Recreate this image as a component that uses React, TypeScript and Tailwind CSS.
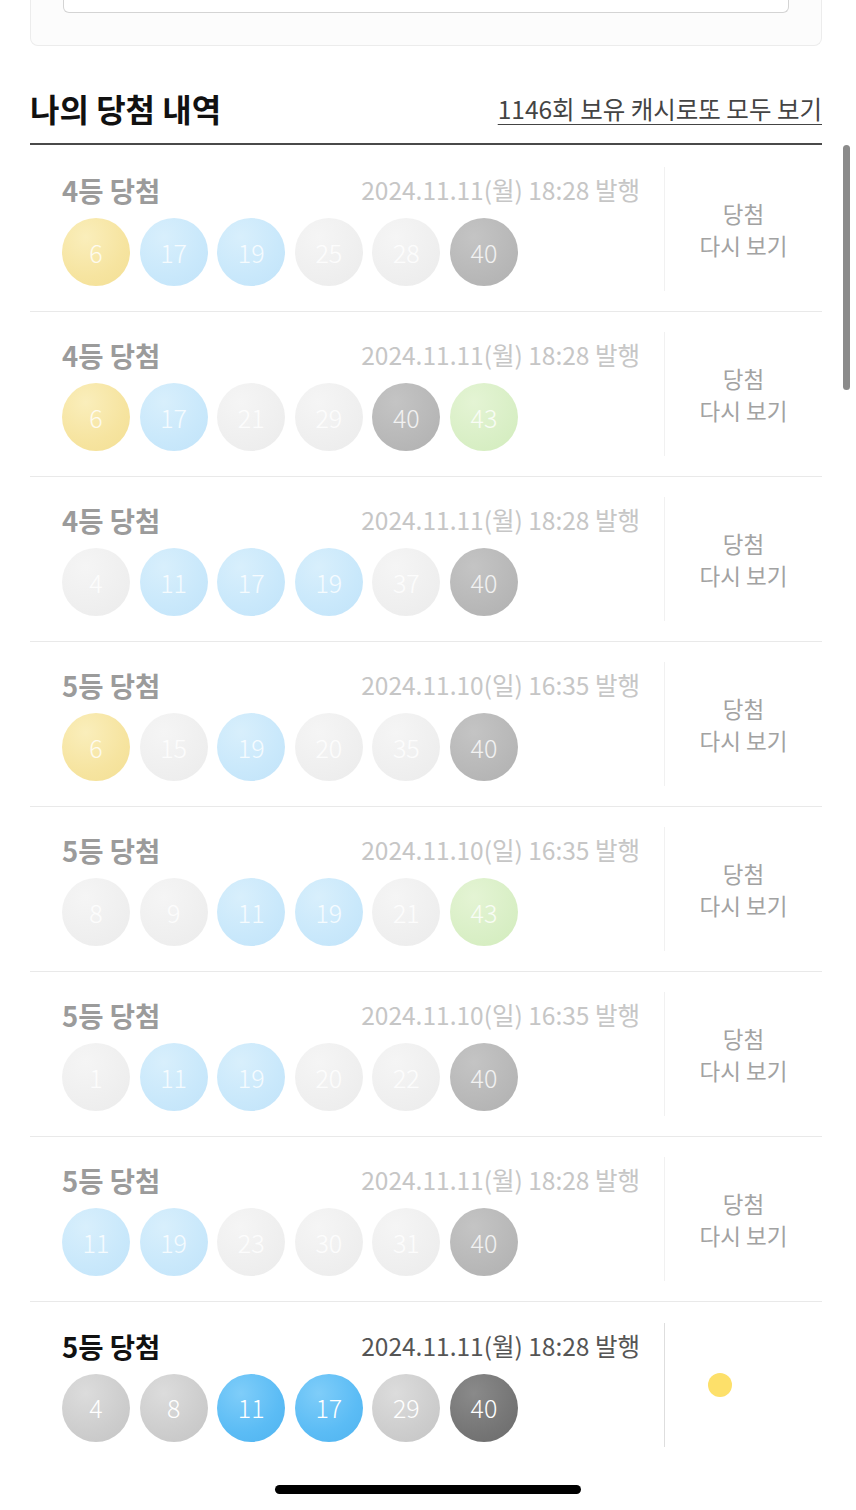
import React from "react";

type Kind = "y" | "b" | "d" | "g" | "n";

const ballFull: Record<Kind, string> = {
  y: "bg-[radial-gradient(circle_at_35%_28%,#fde27a_0%,#f6cc3a_60%,#efc020_100%)]",
  b: "bg-[radial-gradient(circle_at_35%_28%,#7fcdf9_0%,#5bbcf5_60%,#4fb3ef_100%)]",
  d: "bg-[radial-gradient(circle_at_35%_28%,#8a8a8a_0%,#767676_60%,#6a6a6a_100%)]",
  g: "bg-[radial-gradient(circle_at_35%_28%,#b6e08a_0%,#9fd46c_60%,#92cc5c_100%)]",
  n: "bg-[radial-gradient(circle_at_35%_28%,#dcdcdc_0%,#cdcdcd_60%,#c4c4c4_100%)]",
};

const ballFaded: Record<Kind, string> = {
  y: "bg-[radial-gradient(circle_at_35%_28%,#faeebb_0%,#f6e4a0_60%,#f3df94_100%)]",
  b: "bg-[radial-gradient(circle_at_35%_28%,#d8effc_0%,#c9e8fb_60%,#c1e3f9_100%)]",
  d: "bg-[radial-gradient(circle_at_35%_28%,#c4c4c4_0%,#b8b8b8_60%,#b0b0b0_100%)]",
  g: "bg-[radial-gradient(circle_at_35%_28%,#e4f4d4_0%,#d9efc6_60%,#d2ecbc_100%)]",
  n: "bg-[radial-gradient(circle_at_35%_28%,#f5f5f5_0%,#efefef_60%,#ebebeb_100%)]",
};

type Row = {
  rank: string;
  date: string;
  balls: [number, Kind][];
  faded: boolean;
};

const rows: Row[] = [
  { rank: "4등 당첨", date: "2024.11.11(월) 18:28 발행", faded: true, balls: [[6, "y"], [17, "b"], [19, "b"], [25, "n"], [28, "n"], [40, "d"]] },
  { rank: "4등 당첨", date: "2024.11.11(월) 18:28 발행", faded: true, balls: [[6, "y"], [17, "b"], [21, "n"], [29, "n"], [40, "d"], [43, "g"]] },
  { rank: "4등 당첨", date: "2024.11.11(월) 18:28 발행", faded: true, balls: [[4, "n"], [11, "b"], [17, "b"], [19, "b"], [37, "n"], [40, "d"]] },
  { rank: "5등 당첨", date: "2024.11.10(일) 16:35 발행", faded: true, balls: [[6, "y"], [15, "n"], [19, "b"], [20, "n"], [35, "n"], [40, "d"]] },
  { rank: "5등 당첨", date: "2024.11.10(일) 16:35 발행", faded: true, balls: [[8, "n"], [9, "n"], [11, "b"], [19, "b"], [21, "n"], [43, "g"]] },
  { rank: "5등 당첨", date: "2024.11.10(일) 16:35 발행", faded: true, balls: [[1, "n"], [11, "b"], [19, "b"], [20, "n"], [22, "n"], [40, "d"]] },
  { rank: "5등 당첨", date: "2024.11.11(월) 18:28 발행", faded: true, balls: [[11, "b"], [19, "b"], [23, "n"], [30, "n"], [31, "n"], [40, "d"]] },
  { rank: "5등 당첨", date: "2024.11.11(월) 18:28 발행", faded: false, balls: [[4, "n"], [8, "n"], [11, "b"], [17, "b"], [29, "n"], [40, "d"]] },
];

function Ball({ n, k, faded }: { n: number; k: Kind; faded: boolean }) {
  return (
    <div
      className={`w-[68px] h-[68px] rounded-full flex items-center justify-center text-[25px] font-light leading-none ${
        faded ? "text-white/80 " + ballFaded[k] : "text-white " + ballFull[k]
      }`}
    >
      {n}
    </div>
  );
}

function HistoryRow({ row, last }: { row: Row; last: boolean }) {
  return (
    <div className={`flex h-[165px] ${last ? "" : "border-b border-[#e9e9e9]"}`}>
      <div className="flex-1 pl-[32px] pr-[24px] flex flex-col justify-center">
        <div className="flex items-center justify-between h-[36px]">
          <span className={`text-[27.5px] font-bold leading-[36px] ${row.faded ? "text-[#9b9b9b]" : "text-[#111]"}`}>
            {row.rank}
          </span>
          <span className={`text-[24.5px] leading-[36px] ${row.faded ? "text-[#c6c6c6]" : "text-[#555]"}`}>
            {row.date}
          </span>
        </div>
        <div className="flex gap-[9.6px] mt-[10px]">
          {row.balls.map(([n, k], i) => (
            <Ball key={i} n={n} k={k} faded={row.faded} />
          ))}
        </div>
      </div>
      <div className="w-[158px] flex items-center">
        <div className={`w-px h-[124px] ${row.faded ? "bg-[#f1f1f1]" : "bg-[#dedede]"}`} />
        <div className="flex-1 flex items-center justify-center">
          {row.faded ? (
            <div className="text-center text-[22.5px] leading-[32px] text-[#a2a2a2]">
              <div>당첨</div>
              <div>다시 보기</div>
            </div>
          ) : (
            <div className="flex items-center">
              <div className="w-[24px] h-[24px] rounded-full bg-[#fde06a]" />
              <div className="w-[24px] h-[24px] rounded-full" />
              <div className="w-[24px] h-[24px] rounded-full" />
            </div>
          )}
        </div>
      </div>
    </div>
  );
}

export default function App() {
  return (
    <div
      className="relative w-[856px] h-[1510px] bg-white overflow-hidden"
      style={{ fontFamily: '"Noto Sans CJK KR", "Noto Sans", sans-serif' }}
    >
      <div className="pl-[30px] pr-[34px]">
        <div className="h-[46px] border border-t-0 border-[#ececec] rounded-b-[8px] bg-[#fcfcfc] px-[32px]">
          <div className="h-[13px] border border-t-0 border-[#d4d4d4] rounded-b-[6px] bg-white" />
        </div>
        <div className="h-[97px] flex items-end justify-between pb-[14px]">
          <span className="text-[32px] font-bold text-[#111] leading-[42px]">나의 당첨 내역</span>
          <span className="text-[24.5px] text-[#444] leading-[36px] underline underline-offset-[5px] decoration-1 mb-[2px]">
            1146회 보유 캐시로또 모두 보기
          </span>
        </div>
        <div className="h-[2px] bg-[#4a4a4a] mb-[2px]" />
        {rows.map((r, i) => (
          <HistoryRow key={i} row={r} last={i === rows.length - 1} />
        ))}
      </div>
      <div className="absolute left-[843px] top-[145px] w-[7px] h-[245px] rounded-full bg-[#8b8b8b]" />
      <div className="absolute left-[275px] top-[1485px] w-[306px] h-[9px] rounded-full bg-black" />
    </div>
  );
}
